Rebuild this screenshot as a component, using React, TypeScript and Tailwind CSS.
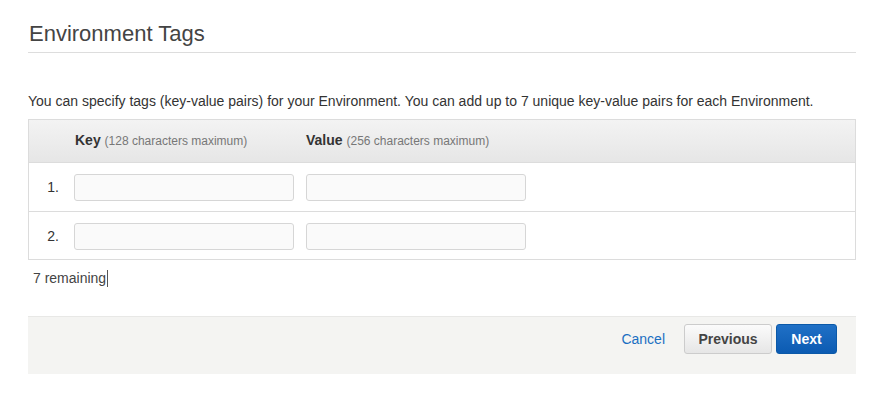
import React from 'react';

const rows = [1, 2];

const App: React.FC = () => {
  return (
    <div className="min-h-[394px] bg-white font-['Liberation_Sans',Arial,sans-serif] text-[#333]">
      <div className="ml-[28px] w-[828px] pt-[20px]">
        <h2 className="border-b border-[#dddddd] pb-[4px] pl-[1px] text-[22px] leading-[28px] text-[#444]">
          Environment Tags
        </h2>

        <p className="mt-[40px] text-[14px] leading-[17px] text-[#333]">
          You can specify tags (key-value pairs) for your Environment. You can add up to 7 unique key-value pairs for each Environment.
        </p>

        <div className="mt-[9px] border border-[#dcdcdc]">
          <div className="flex h-[43px] items-center border-b border-[#dcdcdc] bg-gradient-to-b from-[#f3f3f3] to-[#e6e6e6] pb-[2px]">
            <div className="w-[46px]" />
            <div className="w-[231px] text-[14px]">
              <span className="font-bold text-[#333]">Key</span>{' '}
              <span className="text-[12px] text-[#777]">(128 characters maximum)</span>
            </div>
            <div className="text-[14px]">
              <span className="font-bold text-[#333]">Value</span>{' '}
              <span className="text-[12px] text-[#777]">(256 characters maximum)</span>
            </div>
          </div>
          {rows.map((n, i) => (
            <div
              key={n}
              className={`flex h-[48px] items-start pt-[11px] ${i > 0 ? 'border-t border-[#dcdcdc]' : ''}`}
            >
              <div className="w-[45px] pr-[15px] pt-[5px] text-right text-[14px] leading-[17px] text-[#333]">
                {n}.
              </div>
              <input
                className="h-[27px] w-[220px] rounded-[3px] border border-[#d6d6d6] bg-[#fafafa] px-2 text-[13px] outline-none"
                type="text"
              />
              <input
                className="ml-[12px] h-[27px] w-[220px] rounded-[3px] border border-[#d6d6d6] bg-[#fafafa] px-2 text-[13px] outline-none"
                type="text"
              />
            </div>
          ))}
        </div>

        <div className="mt-[9px] flex items-center pl-[5px] text-[14px] leading-[18px] text-[#444]">
          <span>7 remaining</span>
          <span className="ml-[1px] h-[17px] w-px bg-[#555]" />
        </div>

        <div className="mt-[29px] flex h-[58px] items-start justify-end border-t border-[#e8e8e6] bg-[#f4f4f2] pr-[19px] pt-[7px]">
          <a href="#" className="mr-[19px] mt-[7px] text-[14px] leading-[16px] text-[#1a6fc2]">
            Cancel
          </a>
          <button className="h-[30px] w-[88px] rounded-[3px] border border-[#cccccc] bg-gradient-to-b from-[#fbfbfb] to-[#e6e6e6] text-[14px] font-bold text-[#444]">
            Previous
          </button>
          <button className="ml-[4px] h-[30px] w-[61px] rounded-[3px] border border-[#0b59a8] bg-gradient-to-b from-[#1f70c6] to-[#0b5bb2] text-[14px] font-bold text-white">
            Next
          </button>
        </div>
      </div>
    </div>
  );
};

export default App;
